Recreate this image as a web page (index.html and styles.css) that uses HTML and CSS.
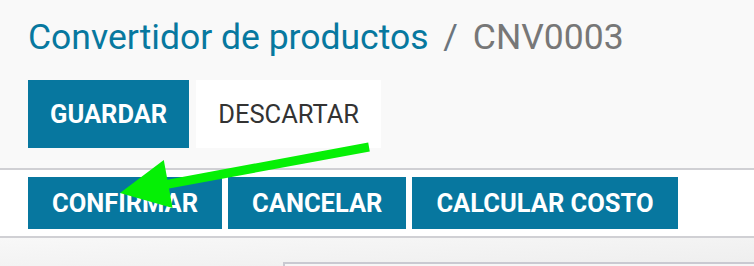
FILE: index.html
```html
<!DOCTYPE html>
<html lang="es">
<head>
  <meta charset="UTF-8" />
  <title>Convertidor de productos</title>
  <link rel="stylesheet" href="styles.css">
</head>
<body>
  <div class="control-panel">
    <h1 class="breadcrumb">
      <a class="crumb-link">Convertidor de productos</a>
      <span class="crumb-sep">/</span>
      <span class="crumb-active">CNV0003</span>
    </h1>
    <div class="buttons">
      <button class="btn btn-primary">GUARDAR</button>
      <button class="btn btn-secondary">DESCARTAR</button>
    </div>
  </div>

  <div class="statusbar">
    <button class="btn btn-primary btn-status">CONFIRMAR</button>
    <button class="btn btn-primary btn-status">CANCELAR</button>
    <button class="btn btn-primary btn-status">CALCULAR COSTO</button>
  </div>

  <div class="sheet-bg">
    <div class="sheet"></div>
  </div>

  <svg class="arrow" width="754" height="266" viewBox="0 0 754 266">
    <polygon points="368.2,142.6 369.8,151.4 169,188.5 172.6,208.1 120,193 163.8,160.1 167.4,179.7" fill="#05f005"/>
  </svg>
</body>
</html>
```

FILE: styles.css
```css
body {
  font-family: Roboto, "Liberation Sans", sans-serif;
  background: #f9f9f9;
  margin: 0;
  overflow: hidden;
  position: relative;
}
.control-panel {
  padding: 16px 28px 20px;
}
.breadcrumb {
  margin: 0;
  font-size: 35.5px;
  font-weight: normal;
  line-height: 43px;
  white-space: nowrap;
}
.crumb-link {
  color: #07789f;
}
.crumb-sep {
  color: #6c757d;
  margin: 0 6px;
}
.crumb-active {
  color: #777;
}
.buttons {
  display: flex;
  gap: 7px;
  margin-top: 21px;
}
.btn {
  font-family: Roboto, "Liberation Sans", sans-serif;
  font-size: 25.5px;
  line-height: 30px;
  padding: 19px 22px;
  border: none;
  border-radius: 0;
  margin: 0;
  cursor: pointer;
}
.btn-primary {
  background: #07779f;
  color: #fff;
  font-weight: bold;
}
.btn-secondary {
  background: #fff;
  color: #333;
}
.statusbar {
  display: flex;
  gap: 6px;
  background: #fff;
  border-top: 2px solid #d0d0d4;
  border-bottom: 2px solid #d0d0d4;
  padding: 7px 28px;
}
.btn-status {
  padding: 11px 24px;
}
.sheet-bg {
  height: 4px;
  padding: 24px 0 0 283px;
  background: linear-gradient(to bottom right, #f8f8f8, #eeeeee);
}
.sheet {
  height: 100%;
  background: #f6f6f6;
  border-top: 2px solid #c9c9d1;
  border-left: 2px solid #c9c9d1;
}
.arrow {
  position: absolute;
  top: 0;
  left: 0;
  pointer-events: none;
}
```
